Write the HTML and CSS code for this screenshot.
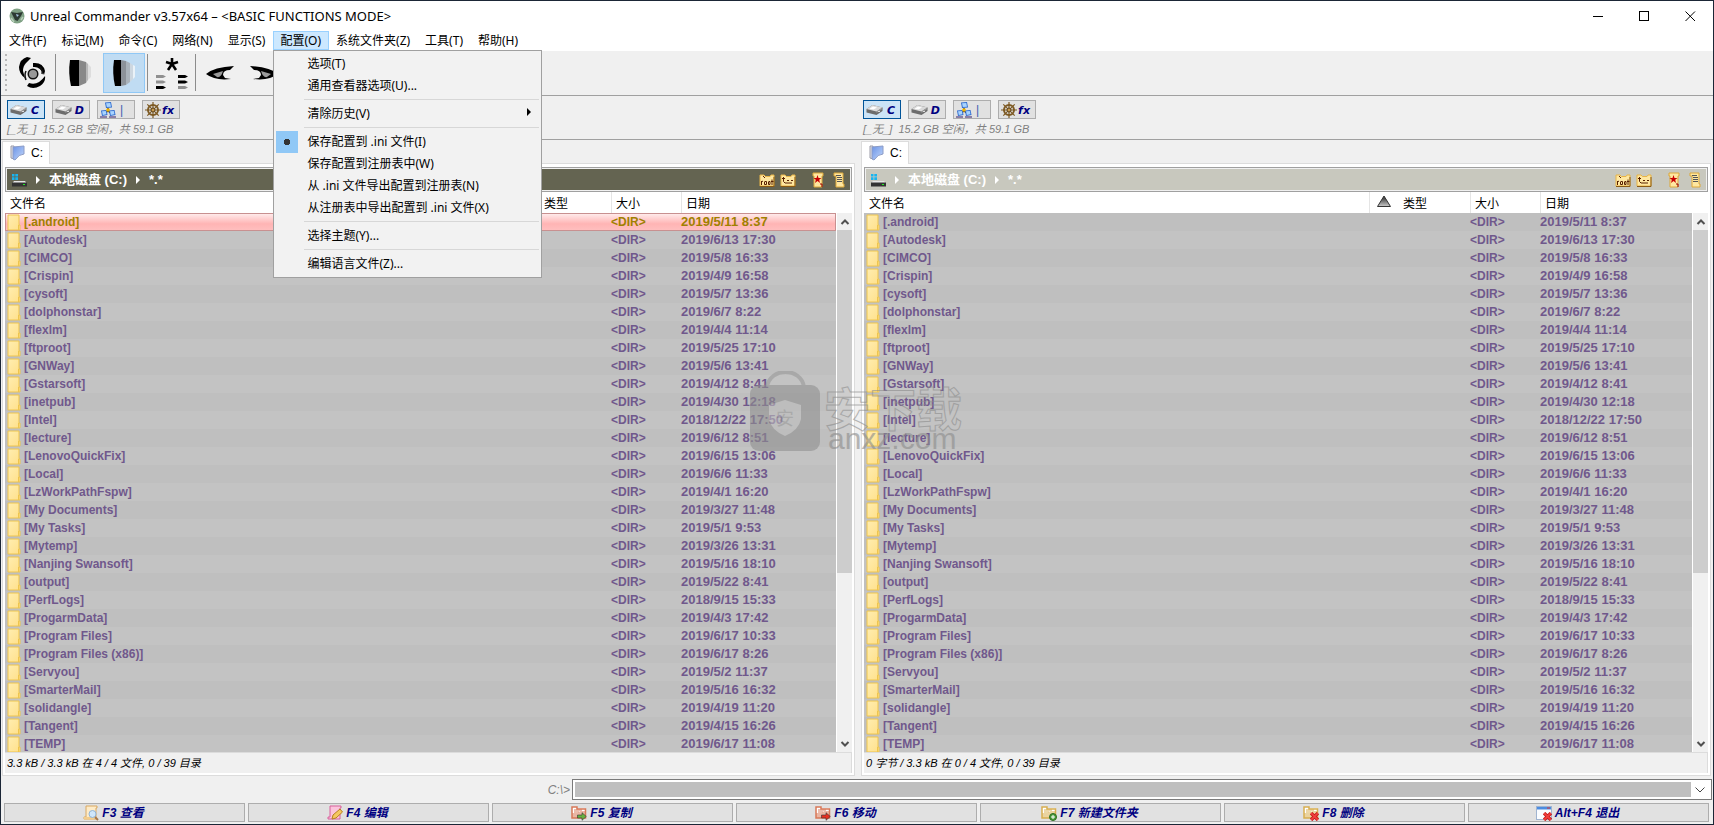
FILE: index.html
```html
<!DOCTYPE html>
<html lang="zh-CN">
<head>
<meta charset="utf-8">
<title>Unreal Commander v3.57x64</title>
<link rel="stylesheet" href="styles.css">
</head>
<body>
<svg class="defs" aria-hidden="true">
  <defs>
    <linearGradient id="g-folder" x1="0" x2="1" y1="0" y2="1"><stop offset="0" stop-color="#ffedb0"/><stop offset="1" stop-color="#ffe08a"/></linearGradient>
    <linearGradient id="g-flag" x1="0" x2="1" y1="0" y2="1"><stop offset="0" stop-color="#6b93e6"/><stop offset="1" stop-color="#c3d8fb"/></linearGradient>
    <linearGradient id="g-sort" x1="0" x2="0" y1="0" y2="1"><stop offset="0" stop-color="#222"/><stop offset="1" stop-color="#ccc"/></linearGradient>
  </defs>
  <symbol id="i-disk" viewBox="0 0 16 12">
    <path d="M0 5 6 1 16 3.5V7L10 11 0 8.5Z" fill="#6c6c6c"/><path d="M0 5 6 1 16 3.5 10 7.5Z" fill="#dadada"/><path d="M3 4.8 6.5 2.4 10.5 3.4 7 5.6Z" fill="#fff"/><path d="M10 7.5 16 3.5V5L10 9Z" fill="#999"/><rect x="11.5" y="7" width="2" height="1" fill="#ddd"/>
  </symbol>
  <symbol id="i-net" viewBox="0 0 16 16">
    <path d="M8 6V10M4 12 8 9l4 3" stroke="#333" stroke-width="1.5" fill="none"/>
    <path d="M5 .5 11 0 12 5.500 6 6Z" fill="#2f6cd0"/><path d="M6 1.300 10.300 1 11 4.700 6.800 5Z" fill="#a8d4ff"/>
    <path d="M1 8.500 6.500 8 7.500 13 2 14Z" fill="#2f6cd0"/><path d="M2 9.300 5.800 9 6.500 12.300 2.800 13Z" fill="#a8d4ff"/>
    <path d="M9 8.500 14.500 8 15.500 13 10 14Z" fill="#2f6cd0"/><path d="M10 9.300 13.800 9 14.500 12.300 10.800 13Z" fill="#a8d4ff"/>
    <path d="M0 15h7M9 15h7" stroke="#8a7fa8" stroke-width="2"/><circle cx="8" cy="8" r="1.800" fill="#f0b400"/>
  </symbol>
  <symbol id="i-wheel" viewBox="0 0 16 16">
    <g fill="none" stroke="#7d5a24"><circle cx="8" cy="8" r="5" stroke-width="2"/><path d="M8 0V16M0 8H16M2.3 2.3 13.7 13.7M13.7 2.3 2.3 13.7" stroke-width="1.2"/></g><circle cx="8" cy="8" r="2" fill="#c79a4e" stroke="#5d4218"/>
  </symbol>
  <symbol id="i-flag" viewBox="0 0 15 16">
    <path d="M1 1H4V14L1 13Z" fill="#e4e4ea" stroke="#9a9aa6"/><path d="M3 2 14 1V9Q9 9 5 15L3 14Z" fill="url(#g-flag)" stroke="#8c9cc6"/>
  </symbol>
  <symbol id="i-pc" viewBox="0 0 16 14">
    <path d="M1 1H3.5V3.5H1ZM4.3 1H7V3.5H4.3ZM1 4.3H3.5V7H1ZM4.3 4.3H7V7H4.3Z" fill="#18b4f0"/><path d="M3 8H14L15.5 10H1.5Z" fill="#e6e6e6"/><rect x="1" y="9.5" width="15" height="4" fill="#333"/><rect x="12" y="11" width="2" height="1" fill="#2e2"/>
  </symbol>
  <symbol id="i-root" viewBox="0 0 16 14">
    <path d="M1 2H5L6.5 3.5H11L12 2H15V13H1Z" fill="#ffe7a0" stroke="#e6b448"/><path d="M15 4V13.5H1" fill="none" stroke="#8a5a14"/>
    <path d="M4 3 6 5M2.500 8V12M2.500 9 4 8M6 8.500H7.500V11.500H5.500V8.500M10 8.500H11V11.500H9.500V8.500M13 6.500V12M12 8.500H14.500" fill="none" stroke="#582000"/>
  </symbol>
  <symbol id="i-up" viewBox="0 0 16 14">
    <path d="M1 2H5L6.500 3.500H11L12 2H15V13H1Z" fill="#ffe7a0" stroke="#e6b448"/><path d="M15 4V13.500H1" fill="none" stroke="#8a5a14"/>
    <path d="M2 5.500H5M3.500 4V8.500L5 10H12M7 7.500H9M11 7.500H13" fill="none" stroke="#582000"/>
  </symbol>
  <symbol id="i-fav" viewBox="0 0 12 16">
    <path d="M1 1H11V4H10V15H2V4H1Z" fill="#ffe7a0" stroke="#dca83a"/><path d="M5.500 3 6.500 6H9.500L7.200 7.800 8 11 5.500 9 3 11 3.800 7.800 1.500 6H4.500Z" fill="#c80000"/><path d="M8 12H10V15" stroke="#900" fill="none"/>
  </symbol>
  <symbol id="i-list" viewBox="0 0 12 16">
    <path d="M1 1H10V12H11V15H3V4H1Z" fill="#ffe7a0" stroke="#dca83a"/><path d="M3 3.500H8M4 5.500H9M4 7.500H9M4 9.500H9" stroke="#555"/>
  </symbol>
  <symbol id="i-folder" viewBox="0 0 14 17">
    <path d="M1 1H12V11H13V16H1Z" fill="url(#g-folder)" stroke="#eec54e"/><path d="M11.500 11V16" stroke="#eec54e"/>
  </symbol>
  <symbol id="i-chev" viewBox="0 0 10 8"><path d="M1.500 6 5 2.500 8.500 6" fill="none" stroke="#505050" stroke-width="2"/></symbol>
  <symbol id="i-doc" viewBox="0 0 16 16">
    <path d="M3 1H14V3H13V14H1V12H3Z" fill="#fdebc8" stroke="#d9a860"/><path d="M1 12H11V14.500H1Z" fill="#f3cd8c"/>
  </symbol>
  <symbol id="i-fold" viewBox="0 0 16 16"><path d="M1 2H6L7 3.500H14V13H1Z" fill="#fff"/><path d="M1 2H6V4H14.500V13H1Z" fill="none" stroke="currentColor" stroke-width="1.500"/><path d="M1 8H7L9 6H14V13H1Z" fill="currentColor" opacity=".55"/><path d="M3 5H11M3 7H8" stroke="currentColor"/></symbol>
  <symbol id="i-cross" viewBox="0 0 8 8"><path d="M1 1 7 7M7 1 1 7" stroke="#c81818" stroke-width="3"/><path d="M1 1 7 7M7 1 1 7" stroke="#f04040" stroke-width="1.500"/></symbol>
  <symbol id="i-arrow" viewBox="0 0 10 9"><path d="M.5 3H5V.7L9.300 4.500 5 8.300V6H.5Z" fill="currentColor" stroke="#333" stroke-width=".6"/></symbol>
</svg>

<div class="window">
  <header class="titlebar">
    <svg class="app-icon" viewBox="0 0 16 16" aria-hidden="true"><circle cx="8" cy="8" r="7.500" fill="#7fa184"/><path d="M2 4 8 5 14 4 12 8 8.500 13 6 12 4 8Z" fill="#2c3a32"/><path d="M7 6 10 7 8 9Z" fill="#a8c4e0"/><path d="M2 10 5 14M12 12 14 9" stroke="#b9d0ba" stroke-width="1.500"/></svg>
    <h1 class="title">Unreal Commander v3.57x64 – &lt;BASIC FUNCTIONS MODE&gt;</h1>
    <div class="window-buttons">
      <button class="win-btn" aria-label="最小化"><svg viewBox="0 0 11 11"><path d="M0 5.500H10" stroke="#000"/></svg></button>
      <button class="win-btn" aria-label="最大化"><svg viewBox="0 0 11 11"><rect x=".5" y=".5" width="9" height="9" fill="none" stroke="#000"/></svg></button>
      <button class="win-btn" aria-label="关闭"><svg viewBox="0 0 11 11"><path d="M.5.5 10 10M10 .5.5 10" stroke="#000"/></svg></button>
    </div>
  </header>

  <nav class="menubar">
    <button class="menu-item">文件(F)</button>
    <button class="menu-item">标记(M)</button>
    <button class="menu-item">命令(C)</button>
    <button class="menu-item">网络(N)</button>
    <button class="menu-item">显示(S)</button>
    <div class="menu-holder">
      <button class="menu-item open" aria-expanded="true">配置(O)</button>
      <div class="dropdown" role="menu">
        <button class="entry" role="menuitem">选项(T)</button>
        <button class="entry" role="menuitem">通用查看器选项(U)...</button>
        <hr>
        <button class="entry submenu" role="menuitem">清除历史(V)<svg class="sub-arrow" viewBox="0 0 4 8" aria-hidden="true"><path d="M0 0 4 4 0 8Z"/></svg></button>
        <hr>
        <button class="entry chosen" role="menuitemradio" aria-checked="true">保存配置到 .ini 文件(I)</button>
        <button class="entry" role="menuitemradio" aria-checked="false">保存配置到注册表中(W)</button>
        <button class="entry" role="menuitem">从 .ini 文件导出配置到注册表(N)</button>
        <button class="entry" role="menuitem">从注册表中导出配置到 .ini 文件(X)</button>
        <hr>
        <button class="entry" role="menuitem">选择主题(Y)...</button>
        <hr>
        <button class="entry" role="menuitem">编辑语言文件(Z)...</button>
      </div>
    </div>
    <button class="menu-item">系统文件夹(Z)</button>
    <button class="menu-item">工具(T)</button>
    <button class="menu-item">帮助(H)</button>
  </nav>

  <div class="toolbar" role="toolbar">
    <span class="grip"></span>
    <button class="tool" aria-label="刷新"><svg width="28" height="32" viewBox="0 0 28 32">
      <path d="M13 1 8 6Q5 9 5 14L7 21Q1 17 1 10 2 2 9 0Z"/>
      <path d="M15 6Q25 5 27 14L26 18Q22 9 15 10Z"/>
      <path d="M27 19Q28 25 22 29 15 33 9 29L11 26Q20 29 27 19Z"/>
      <path d="M8 23Q6 18 8 14M22 10Q25 13 24 17" fill="none" stroke="#111" stroke-width="1.500"/>
      <circle cx="15" cy="17" r="5.500" fill="#111"/><circle cx="15" cy="17" r="4" fill="#999"/></svg></button>
    <span class="divider"></span>
    <button class="tool" aria-label="简要"><svg width="24" height="28" viewBox="0 0 24 28"><path d="M2 1H11V27H3Q0 14 2 1Z"/><path d="M11 1 18 3V24L11 27Z" fill="#888"/><path d="M18 3 20 5V21L18 24Z" fill="#b8b8b8"/><path d="M20 5 23 8V18L20 21Z" fill="#ddd"/></svg></button>
    <button class="tool pressed" aria-label="详细" aria-pressed="true"><svg width="24" height="28" viewBox="0 0 24 28"><path d="M2 1H9V27H3Q0 14 2 1Z"/><path d="M9 1 14 2V26L9 27Z" fill="#8c9299"/><path d="M14 2 18 4V23L14 26Z" fill="#aab3bb"/><path d="M18 4 21 6V20L18 23Z" fill="#cdd7e0"/><path d="M21 6 23 7V18L21 20Z" fill="#eaf2f8"/></svg></button>
    <span class="divider"></span>
    <button class="tool" aria-label="全部"><svg width="34" height="34" viewBox="0 0 34 34"><path d="M17 2V8M11 6 17 8 23 6M13 14 17 8 21 14" fill="none" stroke="#000" stroke-width="2.600"/><path d="M1 19H8L11 20.500 8 22H1ZM1 24.500H8L11 26 8 27.500H1Z" fill="#909090"/><path d="M1 30H8L11 31.500 8 33H1Z"/><path d="M23 19H30L33 20.500 30 22H23ZM23 24.500H30L33 26 30 27.500H23Z"/><path d="M23 30H30L33 31.500 30 33H23Z" fill="#909090"/></svg></button>
    <span class="divider"></span>
    <button class="tool" aria-label="查看"><svg width="30" height="16" viewBox="0 0 30 16"><path d="M1 9Q9 2 29 1L25 5Q18 5 18 10L20 13 26 14Q10 16 1 9Z"/><path d="M8 9 18 6Q16 13 12 12Z" fill="#999"/></svg></button>
    <button class="tool" aria-label="编辑"><svg width="30" height="16" viewBox="0 0 30 16"><path d="M29 9Q21 2 1 1L5 5Q12 5 12 10L10 13 4 14Q20 16 29 9Z"/><path d="M22 9 12 6Q14 13 18 12Z" fill="#999"/></svg></button>
  </div>

  <main class="panels">
    <section class="panel left">
      <div class="drives">
        <div class="drive-row">
          <button class="drive current"><svg width="17" height="12"><use href="#i-disk"/></svg><b>C</b></button>
          <button class="drive"><svg width="17" height="12"><use href="#i-disk"/></svg><b>D</b></button>
          <button class="drive"><svg width="16" height="16"><use href="#i-net"/></svg><span class="net">|</span></button>
          <button class="drive"><svg width="16" height="16"><use href="#i-wheel"/></svg><b>fx</b></button>
        </div>
        <p class="space">[_无_]&nbsp; 15.2 GB 空闲，共 59.1 GB</p>
      </div>
      <div class="tabs"><button class="tab"><svg width="15" height="16"><use href="#i-flag"/></svg>C:</button></div>
      <div class="body">
        <div class="path">
          <svg width="16" height="14"><use href="#i-pc"/></svg><span class="tri"></span><b>本地磁盘 (C:)</b><span class="tri"></span><b>*.*</b>
          <span class="path-tools">
            <button aria-label="根目录"><svg width="16" height="14"><use href="#i-root"/></svg></button>
            <button aria-label="上级目录"><svg width="16" height="14"><use href="#i-up"/></svg></button>
            <button class="far" aria-label="收藏"><svg width="12" height="16"><use href="#i-fav"/></svg></button>
            <button class="wide" aria-label="历史"><svg width="12" height="16"><use href="#i-list"/></svg></button>
          </span>
        </div>
        <div class="list">
          <table>
            <colgroup><col><col class="c-type"><col class="c-size"><col class="c-date"></colgroup>
            <thead><tr><th>文件名</th><th class="th-type">类型</th><th class="ruled">大小</th><th class="ruled">日期</th></tr></thead>
            <tbody class="files" data-selected="0"></tbody>
          </table>
          <div class="scroll"><button aria-label="向上滚动"><svg width="10" height="8"><use href="#i-chev"/></svg></button><div class="track"><div class="thumb"></div></div><button class="down" aria-label="向下滚动"><svg width="10" height="8"><use href="#i-chev"/></svg></button></div>
        </div>
        <p class="status">3.3 kB / 3.3 kB 在 4 / 4 文件, 0 / 39 目录</p>
      </div>
    </section>

    <section class="panel right">
      <div class="drives">
        <div class="drive-row">
          <button class="drive current"><svg width="17" height="12"><use href="#i-disk"/></svg><b>C</b></button>
          <button class="drive"><svg width="17" height="12"><use href="#i-disk"/></svg><b>D</b></button>
          <button class="drive"><svg width="16" height="16"><use href="#i-net"/></svg><span class="net">|</span></button>
          <button class="drive"><svg width="16" height="16"><use href="#i-wheel"/></svg><b>fx</b></button>
        </div>
        <p class="space">[_无_]&nbsp; 15.2 GB 空闲，共 59.1 GB</p>
      </div>
      <div class="tabs"><button class="tab"><svg width="15" height="16"><use href="#i-flag"/></svg>C:</button></div>
      <div class="body">
        <div class="path">
          <svg width="16" height="14"><use href="#i-pc"/></svg><span class="tri"></span><b>本地磁盘 (C:)</b><span class="tri"></span><b>*.*</b>
          <span class="path-tools">
            <button aria-label="根目录"><svg width="16" height="14"><use href="#i-root"/></svg></button>
            <button aria-label="上级目录"><svg width="16" height="14"><use href="#i-up"/></svg></button>
            <button class="far" aria-label="收藏"><svg width="12" height="16"><use href="#i-fav"/></svg></button>
            <button class="wide" aria-label="历史"><svg width="12" height="16"><use href="#i-list"/></svg></button>
          </span>
        </div>
        <div class="list">
          <table>
            <colgroup><col><col class="c-type"><col class="c-size"><col class="c-date"></colgroup>
            <thead><tr><th>文件名</th><th class="th-type ruled"><svg class="sort" viewBox="0 0 14 12" aria-hidden="true"><path d="M7 1 13.500 11.500H.5Z" fill="url(#g-sort)" stroke="#333"/></svg>类型</th><th class="ruled">大小</th><th class="ruled">日期</th></tr></thead>
            <tbody class="files"></tbody>
          </table>
          <div class="scroll"><button aria-label="向上滚动"><svg width="10" height="8"><use href="#i-chev"/></svg></button><div class="track"><div class="thumb"></div></div><button class="down" aria-label="向下滚动"><svg width="10" height="8"><use href="#i-chev"/></svg></button></div>
        </div>
        <p class="status">0 字节 / 3.3 kB 在 0 / 4 文件, 0 / 39 目录</p>
      </div>
    </section>
  </main>

  <div class="command">
    <label for="cmd">C:\&gt;</label>
    <div class="combo"><input id="cmd" type="text"><button aria-label="展开"><svg width="10" height="6" viewBox="0 0 10 6"><path d="M.5.5 5 5 9.500.5" fill="none" stroke="#444"/></svg></button></div>
  </div>

  <footer class="fkeys">
    <button><svg viewBox="0 0 16 16"><use href="#i-doc"/><circle cx="9.500" cy="9" r="3.500" fill="#cfe6fa" stroke="#8fb4d8"/><path d="M12 12 15 15" stroke="#a87848" stroke-width="2"/></svg>F3 查看</button>
    <button><svg viewBox="0 0 16 16"><path d="M3 1H14V3H13V14H1V12H3Z" fill="#fbc4dc" stroke="#d8609c"/><path d="M5 14 6 10 13 4 15.500 7 9 13Z" fill="#f4c860" stroke="#b88020"/></svg>F4 编辑</button>
    <button><svg class="red-fold" viewBox="0 0 16 16"><use href="#i-fold"/><use class="green" href="#i-arrow" x="6" y="7" width="10" height="9"/></svg>F5 复制</button>
    <button><svg class="red-fold" viewBox="0 0 16 16"><use href="#i-fold"/><use class="red" href="#i-arrow" x="6" y="7" width="10" height="9"/></svg>F6 移动</button>
    <button><svg class="gold-fold" viewBox="0 0 16 16"><use href="#i-fold"/><circle cx="12" cy="12" r="3.500" fill="#4c9c3c" stroke="#2c6c20"/><path d="M12 10V14M10 12H14" stroke="#fff"/></svg>F7 新建文件夹</button>
    <button><svg class="gold-fold" viewBox="0 0 16 16"><use href="#i-fold"/><use href="#i-cross" x="7" y="7" width="9" height="9"/></svg>F8 删除</button>
    <button><svg viewBox="0 0 16 16"><rect x=".5" y="1.500" width="15" height="13" fill="#fafcff" stroke="#a0b4d0"/><path d="M1 2H15V4.500H1Z" fill="#4c8ce0"/><path d="M11 3H14" stroke="#e03030"/><use href="#i-cross" x="7" y="7" width="9" height="9"/></svg>Alt+F4 退出</button>
  </footer>

  <div class="watermark" aria-hidden="true">
    <svg width="70" height="80" viewBox="0 0 70 80"><path d="M17 16C20-4 51-4 54 16" fill="none" stroke="#999" stroke-width="4"/><rect y="14" width="70" height="66" rx="9" fill="#909090"/><path d="M35 29 51 34V48Q49 59 35 65 21 59 19 48V34Z" fill="#bdbdbd"/></svg>
    <span class="shield-char">安</span>
    <div class="mark-text"><span class="mark-cn">安下载</span><span class="mark-en">anxz.com</span></div>
  </div>
</div>
<script src="app.js"></script>
</body>
</html>
```

FILE: styles.css
```css
* { box-sizing: border-box; }
body {
  margin: 0;
  font: 12px/16px "Liberation Sans", "Noto Sans CJK SC", sans-serif;
  color: #000;
}
button { font: inherit; color: inherit; background: none; border: 0; padding: 0; margin: 0; white-space: nowrap; }
p, h1 { margin: 0; }
svg { display: block; flex: none; }
.defs { position: absolute; width: 0; height: 0; }

.window {
  position: relative;
  display: flex;
  flex-direction: column;
  height: 100vh;
  background: #f0f0f0;
  border: 1px solid #1b2636;
}

/* title bar and menu */
.titlebar { display: flex; align-items: center; height: 30px; padding-left: 8px; background: #fff; flex: none; }
.app-icon { width: 16px; height: 16px; }
.title { flex: 1; padding-left: 5px; font: 13px/16px "Noto Sans", sans-serif; }
.window-buttons { display: flex; }
.win-btn { display: grid; place-items: center; width: 46px; height: 30px; }
.win-btn svg { width: 11px; height: 11px; }

.menubar { display: flex; height: 20px; padding-left: 1px; background: #fff; flex: none; font-family: "Noto Sans", "Noto Sans CJK SC", sans-serif; }
.menu-item { height: 19px; padding: 0 8px 0 7px; line-height: 18px; }
.menu-item.open { background: #cce8ff; box-shadow: inset 0 0 0 1px #99d1ff; }
.menu-holder { position: relative; }
.dropdown {
  position: absolute;
  z-index: 5;
  top: 19px;
  left: 0;
  width: 269px;
  padding: 2px;
  background: #f2f2f2;
  border: 1px solid #a0a0a0;
}
.entry { position: relative; display: flex; align-items: center; width: 100%; height: 22px; padding-left: 31px; }
.dropdown hr { height: 6px; margin: 0 0 0 28px; border: 0; background: linear-gradient(#d7d7d7, #d7d7d7) 0 2px / 100% 1px no-repeat; }
.sub-arrow { width: 4px; height: 8px; margin: 0 8px 4px auto; }
.chosen::before { content: ""; position: absolute; left: 0; top: 0; width: 22px; height: 22px; background: radial-gradient(circle, #333 3px, #90c8f6 3px); }

/* toolbar */
.toolbar { display: flex; align-items: center; gap: 2px; height: 45px; padding: 1px 4px 2px; border-bottom: 1px solid #a0a0a0; flex: none; }
.grip { width: 2px; height: 38px; margin-right: 2px; background: repeating-linear-gradient(#b8b8b8 0 2px, transparent 2px 5px); }
.tool { display: grid; place-items: center; width: 42px; height: 40px; }
.pressed { background: #c0dcf3; border: 1px solid #90c8f6; }
.divider { width: 1px; height: 37px; margin-right: 1px; background: #8c8c8c; }

/* panels */
.panels { display: grid; grid-template-columns: 1fr 1fr; flex: 1; min-height: 0; }
.panel { display: flex; flex-direction: column; min-width: 0; min-height: 0; --date: 155px; }
.right { --date: 152px; }
.drives { height: 44px; padding: 4px 6px 0; border-bottom: 1px solid #a0a0a0; flex: none; }
.drive-row { display: flex; gap: 7px; }
.drive { display: flex; align-items: center; justify-content: space-between; width: 38px; height: 19px; padding: 0 5px 0 2px; background: #e1e1e1; border: 1px solid #adadad; color: #000080; }
.drive b { padding-top: 2px; font: italic bold 11px/14px "DejaVu Sans", sans-serif; }
.net { padding-right: 6px; color: #4060b0; }
.current { background: #cce4f7; border-color: #005499; }
.space { padding-top: 2px; font-size: 11px; font-style: italic; color: #808080; white-space: nowrap; }

.tabs { display: flex; height: 23px; padding: 1px 0 0 1px; flex: none; }
.right .tabs { padding-left: 4px; }
.tab { display: flex; align-items: center; gap: 6px; width: 48px; height: 23px; padding-left: 7px; background: #fff; border: solid #dcdcdc; border-width: 1px 1px 0; position: relative; z-index: 1; }

.body { display: flex; flex-direction: column; flex: 1; min-height: 0; margin: 0 2px 0 1px; padding: 3px 2px 2px; background: #fff; border: 1px solid #dcdcdc; }
.right .body { margin: 0 2px 0 4px; }
.path { display: flex; align-items: center; height: 25px; padding-left: 5px; background: #646451; border: 1px solid #a0a0a0; box-shadow: inset 0 0 0 1px #f0f0f0; color: #fff; font-size: 13px; flex: none; }
.right .path { background: #c8c8be; }
.path b { white-space: nowrap; }
.tri { margin: 0 9px; border: solid transparent; border-width: 4px 0 4px 4px; border-left-color: #fff; }
.path-tools { display: flex; align-items: center; gap: 5px; margin-left: auto; padding-right: 6px; }
.far { padding-left: 11px; }
.wide { padding-left: 4px; }

.list { display: flex; flex: 1; min-height: 0; overflow: hidden; }
table { flex: 1; width: 0; border-collapse: collapse; table-layout: fixed; align-self: flex-start; }
.c-type { width: 101px; }
.c-size { width: 70px; }
.c-date { width: var(--date); }
th { height: 21px; padding: 3px 0 0 5px; text-align: left; font-weight: normal; line-height: 18px; }
.ruled { background: linear-gradient(#e5e5e5, #e5e5e5) 0 0 / 1px 100% no-repeat; }
.th-type { padding-left: 34px; }
.sort { float: left; width: 14px; height: 12px; margin: 0 0 0 -26px; }
td { height: 18px; padding: 0; font-weight: bold; line-height: 16px; color: #70588c; white-space: nowrap; }
td:first-child { overflow: hidden; }
.files tr { background: #bfbfbf; }
.files tr:nth-child(even) { background: #c3c3c3; }
.files tr.selected { background: linear-gradient(#fff0f0, #ffb4b4 60%, #ffc0c0); box-shadow: inset 0 0 0 1px #c89090; }
.files .selected td { color: #a08000; }
.name { display: flex; align-items: center; gap: 3px; padding-left: 2px; }
.date { font-size: 13px; }

.scroll { display: flex; flex-direction: column; width: 16px; margin-top: 21px; background: #f0f0f0; border-left: 1px solid #fff; }
.scroll button { display: grid; place-items: center; height: 17px; }
.scroll .down svg { transform: rotate(180deg); }
.track { flex: 1; }
.thumb { height: 68%; background: #cdcdcd; }
.status { height: 21px; padding: 2px 2px 0; font-size: 11px; font-style: italic; background: #f0f0f0; border-top: 1px solid #dcdcdc; border-right: 1px solid #dcdcdc; white-space: nowrap; flex: none; }

/* command line */
.command { display: flex; align-items: center; height: 27px; padding: 0 1px 0 0; flex: none; }
.command label { width: 571px; padding-right: 2px; text-align: right; font-style: italic; color: #808080; }
.combo { display: flex; flex: 1; height: 21px; padding: 2px; background: #fff; border: 1px solid #7a7a7a; }
.combo input { flex: 1; min-width: 0; padding: 0 2px; border: 0; background: #bfbfbf; font: inherit; }
.combo button { display: grid; place-items: center; width: 18px; }

/* function keys */
.fkeys { display: grid; grid-template-columns: repeat(7, 1fr); gap: 3px; padding: 0 4px 2px 3px; flex: none; }
.fkeys button { display: flex; align-items: center; justify-content: center; gap: 3px; height: 19px; padding-right: 22px; background: #e1e1e1; border: 1px solid #adadad; font: italic bold 12px/16px "Liberation Sans", "Noto Sans CJK SC", sans-serif; color: #000080; }
.fkeys svg { width: 16px; height: 16px; }
.red-fold { color: #d87858; }
.gold-fold { color: #d8ae50; }
.green { color: #68b040; }
.red { color: #e83020; }

/* translucent site mark lying over both panels */
.watermark { position: absolute; left: 749px; top: 370px; display: flex; gap: 4px; opacity: .6; pointer-events: none; }
.shield-char { position: absolute; left: 26px; top: 38px; font-size: 18px; line-height: 20px; color: #999; }
.mark-text { display: flex; flex-direction: column; padding-top: 12px; white-space: nowrap; }
.mark-cn { font: bold 46px/46px "Noto Sans CJK SC", sans-serif; color: transparent; -webkit-text-stroke: 1px #8c8c8c; }
.mark-en { padding-left: 4px; font: 30px/20px "Liberation Sans", sans-serif; color: #8c8c8c; }
```

FILE: app.js
```js
const folders = [
  [".android", "2019/5/11 8:37"],
  ["Autodesk", "2019/6/13 17:30"],
  ["CIMCO", "2019/5/8 16:33"],
  ["Crispin", "2019/4/9 16:58"],
  ["cysoft", "2019/5/7 13:36"],
  ["dolphonstar", "2019/6/7 8:22"],
  ["flexlm", "2019/4/4 11:14"],
  ["ftproot", "2019/5/25 17:10"],
  ["GNWay", "2019/5/6 13:41"],
  ["Gstarsoft", "2019/4/12 8:41"],
  ["inetpub", "2019/4/30 12:18"],
  ["Intel", "2018/12/22 17:50"],
  ["lecture", "2019/6/12 8:51"],
  ["LenovoQuickFix", "2019/6/15 13:06"],
  ["Local", "2019/6/6 11:33"],
  ["LzWorkPathFspw", "2019/4/1 16:20"],
  ["My Documents", "2019/3/27 11:48"],
  ["My Tasks", "2019/5/1 9:53"],
  ["Mytemp", "2019/3/26 13:31"],
  ["Nanjing Swansoft", "2019/5/16 18:10"],
  ["output", "2019/5/22 8:41"],
  ["PerfLogs", "2018/9/15 15:33"],
  ["ProgarmData", "2019/4/3 17:42"],
  ["Program Files", "2019/6/17 10:33"],
  ["Program Files (x86)", "2019/6/17 8:26"],
  ["Servyou", "2019/5/2 11:37"],
  ["SmarterMail", "2019/5/16 16:32"],
  ["solidangle", "2019/4/19 11:20"],
  ["Tangent", "2019/4/15 16:26"],
  ["TEMP", "2019/6/17 11:08"]
];

for (const body of document.querySelectorAll(".files")) {
  body.innerHTML = folders.map(([name, date], i) =>
    `<tr${body.dataset.selected === String(i) ? ' class="selected"' : ""}>` +
    `<td><div class="name"><svg width="14" height="17" aria-hidden="true"><use href="#i-folder"/></svg>[${name}]</div></td>` +
    `<td></td><td>&lt;DIR&gt;</td><td class="date">${date}</td></tr>`).join("");
}
```
